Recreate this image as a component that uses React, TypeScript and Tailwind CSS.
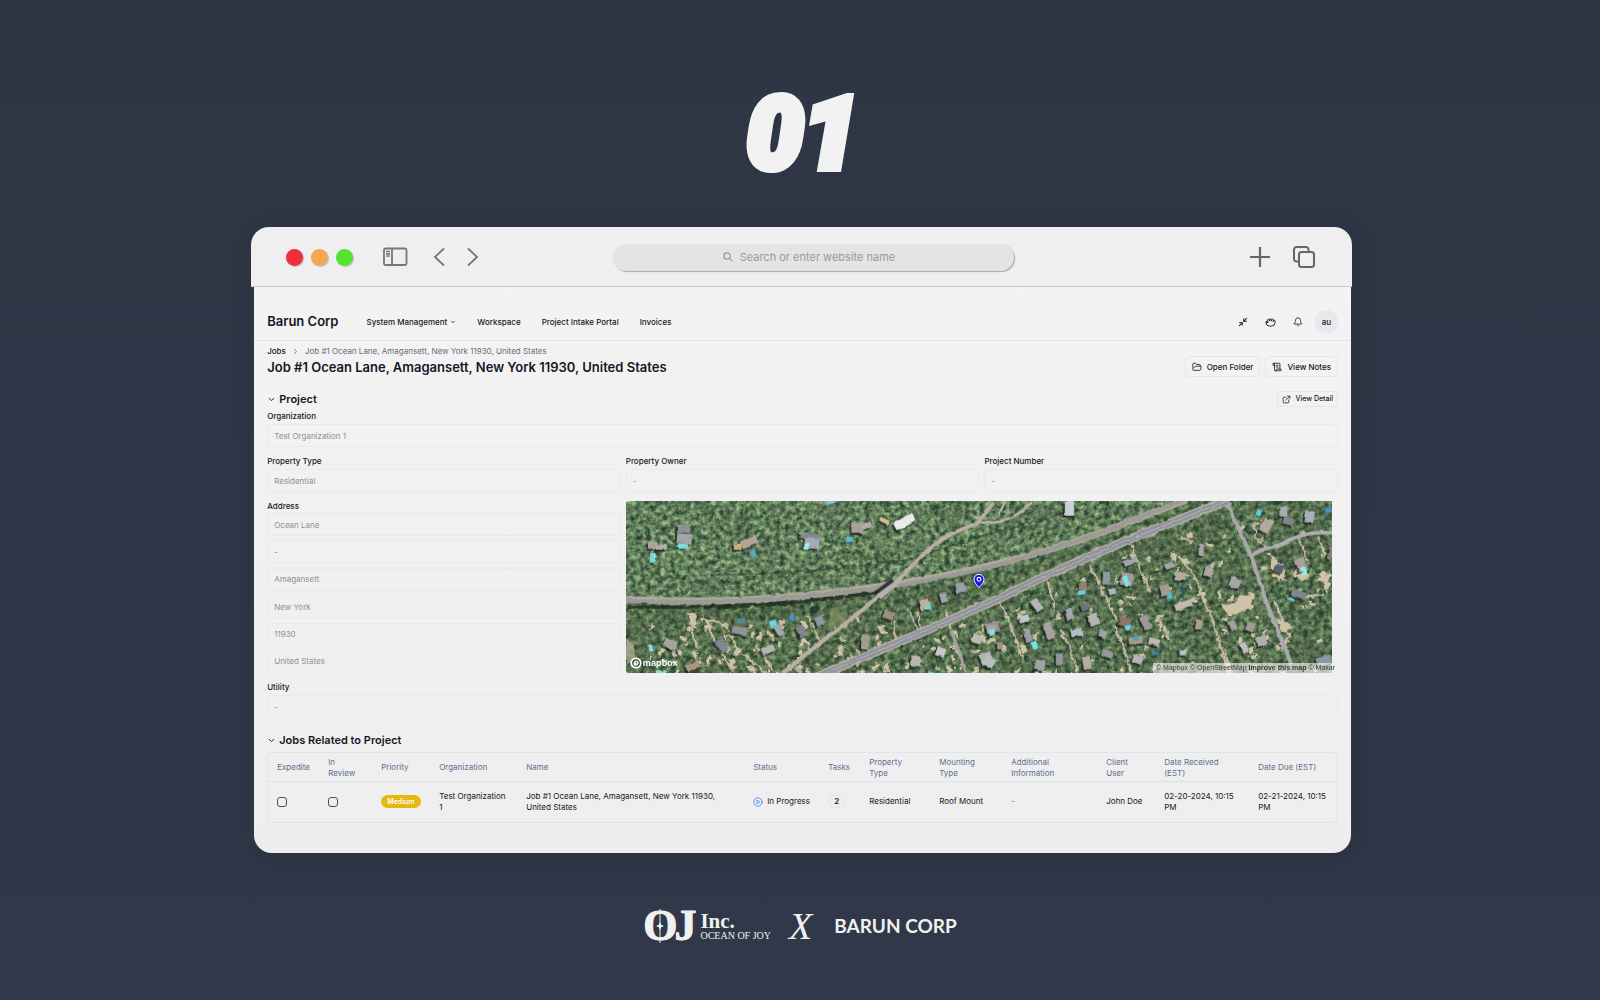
import type { ReactNode } from "react";
import {
  Bell,
  ChevronDown,
  ChevronRight,
  CirclePlay,
  ExternalLink,
  FolderOpen,
  Grab,
  Minimize2,
  ScrollText,
} from "lucide-react";

/* ---------- Browser chrome ---------- */

function SidebarIcon() {
  return (
    <svg viewBox="0 0 25 20" className="h-5 w-[25px]" fill="none" stroke="#777" strokeWidth="1.8">
      <rect x="1" y="1.5" width="22.5" height="16.5" rx="1.5" />
      <path d="M9 1.5v16.5" />
      <path d="M3 4.5h4M3 6.800h4M3.500 9h3.500" strokeWidth="1.700" />
    </svg>
  );
}

function Toolbar() {
  return (
    <div className="grid h-[60px] grid-cols-[13fr_auto_12fr] items-center rounded-t-[18px] border-b border-[#c6c6c6] bg-[#efefef] pt-px pr-[37px] pl-[35px]">
      <div className="flex items-center">
        <div className="flex gap-2">
          <span className="size-[17px] rounded-full bg-[#ee2f3c] shadow-[1px_1px_1px_#0003]" />
          <span className="size-[17px] rounded-full bg-[#f3a84e] shadow-[1px_1px_1px_#0003]" />
          <span className="size-[17px] rounded-full bg-[#53e331] shadow-[1px_1px_1px_#0003]" />
        </div>
        <button aria-label="Toggle sidebar" className="ml-[30px]">
          <SidebarIcon />
        </button>
        <button aria-label="Back" className="ml-[25px]">
          <svg viewBox="0 0 12 20" className="h-5 w-3" fill="none" stroke="#777" strokeWidth="1.8">
            <path d="M11 1.5 2 10l9 8.5" />
          </svg>
        </button>
        <button aria-label="Forward" className="ml-[22px]">
          <svg viewBox="0 0 12 20" className="h-5 w-3" fill="none" stroke="#777" strokeWidth="1.8">
            <path d="M1 1.5 10 10l-9 8.5" />
          </svg>
        </button>
      </div>
      <label className="flex h-[27px] w-[401px] items-center justify-center gap-[7px] rounded-full bg-[#e4e4e4] shadow-[1px_1px_1px_#0000004d]">
        <svg viewBox="0 0 10 10" className="size-[10px]" fill="none" stroke="#999" strokeWidth="1.2">
          <circle cx="4" cy="4" r="3.2" />
          <path d="m6.4 6.4 3 3" />
        </svg>
        <input
          aria-label="Address bar"
          placeholder="Search or enter website name"
          className="w-[164px] bg-transparent text-[11px] outline-none placeholder:text-[#999] placeholder:opacity-100"
        />
      </label>
      <div className="flex items-center justify-end gap-[23px]">
        <button aria-label="New tab">
          <svg viewBox="0 0 20 20" className="size-5" stroke="#666" strokeWidth="2.2">
            <path d="M10 0v20M0 10h20" />
          </svg>
        </button>
        <button aria-label="Show tabs">
          <svg viewBox="0 0 22 22" className="size-[22px]" fill="none" stroke="#666" strokeWidth="2">
            <path d="M6 15.500H3.500A2.500 2.500 0 0 1 1 13V3.500A2.500 2.500 0 0 1 3.500 1H13a2.500 2.500 0 0 1 2.500 2.500V6" />
            <rect x="6" y="6" width="15" height="15" rx="2.500" />
          </svg>
        </button>
      </div>
    </div>
  );
}

/* ---------- Form parts ---------- */

function ReadOnlyInput({ value, label, id }: { value: string; label?: string; id?: string }) {
  return (
    <input
      id={id}
      aria-label={label}
      readOnly
      value={value}
      className="h-[23px] w-full rounded-[4px] border border-[#e9eaec] bg-transparent px-[6px] text-[8px] text-[#8d9098] outline-none"
    />
  );
}

function Field({ id, label, value }: { id: string; label: string; value: string }) {
  return (
    <div className="flex flex-col gap-[3px]">
      <label htmlFor={id} className="text-[8px] leading-[10px] font-medium">
        {label}
      </label>
      <ReadOnlyInput id={id} value={value} />
    </div>
  );
}

function SectionTitle({ children }: { children: ReactNode }) {
  return (
    <button className="flex items-center gap-[3px] text-[11px] leading-4 font-semibold">
      <ChevronDown className="size-[9px]" strokeWidth={2.5} />
      {children}
    </button>
  );
}

function OutlineButton({ children, small }: { children: ReactNode; small?: boolean }) {
  return (
    <button
      className={
        small
          ? "flex h-4 items-center gap-[5px] rounded-[3px] border border-[#e4e6ea] px-[4px] text-[7px] font-medium"
          : "flex h-[21px] items-center gap-[5px] rounded-[4px] border border-[#e4e6ea] px-[6px] text-[8px] font-medium"
      }
    >
      {children}
    </button>
  );
}

/* ---------- Satellite map ---------- */

function createRandom(seed: number) {
  let s = seed;
  return () => {
    s = (s * 1664525 + 1013904223) % 4294967296;
    return s / 4294967296;
  };
}

// x, y, width, height, rotation, fill
type Block = [number, number, number, number, number, string];

const HOUSES: Block[] = [
  [22, 41, 9, 7, 0, "#a9a29f"], [30, 44, 11, 5, 0, "#b7afa6"], [51, 24, 13, 8, 0, "#8f9093"],
  [51, 33, 15, 10, 5, "#a3a4a8"], [115, 37, 17, 9, -25, "#b3a597"], [108, 43, 8, 6, 0, "#c8b183"],
  [175, 33, 20, 5, 5, "#85898f"], [179, 37, 15, 11, 5, "#a5a9b2"], [226, 22, 12, 10, 0, "#a7a09c"],
  [236, 22, 10, 6, -15, "#b3aea8"], [268, 17, 22, 9, -28, "#e9eaea"], [254, 18, 10, 4, 25, "#d2bd92"],
  [108, 118, 12, 8, 0, "#6d6b45"], [106, 126, 16, 8, 10, "#8e9497"], [150, 124, 7, 12, -30, "#a2a7ad"],
  [172, 125, 8, 12, -28, "#83858a"], [187, 105, 7, 6, 20, "#2e3840"], [190, 116, 8, 9, -25, "#8c989f"],
  [330, 82, 10, 10, -15, "#9aa0a8"], [315, 92, 7, 10, -15, "#a1a1a8"], [295, 99, 9, 10, -15, "#bfae9b"],
  [258, 110, 11, 9, 20, "#a08d80"], [236, 134, 8, 15, 5, "#a39c94"], [136, 146, 13, 7, -25, "#b5b5b8"],
  [92, 138, 8, 14, -35, "#7e8792"], [38, 139, 13, 9, 20, "#a5a59b"], [361, 122, 13, 10, -15, "#9a9490"],
  [347, 134, 10, 9, 20, "#c2bab0"], [286, 155, 9, 11, 0, "#b9b5b0"], [311, 147, 9, 9, 20, "#c9c7c4"],
  [355, 152, 12, 12, -20, "#b2b2b2"], [440, 1, 9, 14, 0, "#cdd0d2"], [478, 71, 7, 12, 5, "#8f98a3"],
  [454, 82, 8, 8, 0, "#937f70"], [496, 72, 12, 13, 10, "#a29c97"], [484, 88, 7, 6, -15, "#b0b5bb"],
  [536, 84, 9, 12, -15, "#a79b91"], [499, 58, 14, 6, -20, "#a2a6ab"], [574, 44, 6, 11, 0, "#a6a5a6"],
  [540, 62, 10, 6, -20, "#a1a4a8"], [550, 72, 11, 8, 0, "#b7ad9d"], [580, 66, 8, 10, 15, "#b0a6a0"],
  [605, 77, 11, 10, 20, "#a3a5a7"], [637, 18, 10, 14, 30, "#b3a99e"], [656, 6, 7, 10, 0, "#a9abac"],
  [659, 17, 10, 7, 15, "#82878b"], [680, 10, 10, 12, 10, "#acb0b5"], [672, 57, 10, 14, -20, "#a89f97"],
  [651, 64, 8, 8, 20, "#596472"], [667, 90, 15, 7, 20, "#82868b"], [408, 98, 8, 13, -35, "#b3b5b7"],
  [441, 108, 7, 12, -15, "#a0a8b3"], [464, 113, 10, 12, -20, "#b1b5b4"], [456, 103, 9, 6, -20, "#6c7780"],
  [394, 115, 10, 7, -15, "#c3c6c6"], [420, 122, 8, 17, -20, "#a8a29d"], [400, 128, 6, 13, -10, "#9b9ea3"],
  [446, 128, 12, 8, -10, "#b6bcc2"], [474, 130, 8, 8, 20, "#9fa3a4"], [494, 117, 12, 9, 20, "#8a776a"],
  [517, 115, 8, 14, -25, "#9e9a97"], [550, 101, 18, 7, -20, "#c0bcaf"], [571, 120, 7, 9, 0, "#b19f93"],
  [605, 120, 7, 10, -20, "#a3a0a1"], [622, 122, 8, 9, 20, "#a39b93"], [617, 142, 6, 11, -20, "#c0bfbd"],
  [632, 136, 10, 9, -20, "#afb0af"], [504, 136, 14, 8, -10, "#a69c92"], [524, 138, 11, 7, 15, "#c0bab0"],
  [362, 125, 8, 8, 0, "#a7a7a4"], [358, 156, 12, 10, 30, "#b7bcc0"], [410, 160, 10, 9, 15, "#a1a3a2"],
  [431, 153, 7, 12, 0, "#94989c"], [458, 156, 8, 13, -10, "#b3aea5"], [477, 150, 12, 7, 15, "#999b98"],
  [508, 155, 10, 8, 20, "#b3b5b9"], [692, 156, 15, 9, -15, "#8b98a6"], [372, 142, 6, 7, 0, "#9a948b"],
  [60, 162, 14, 8, -25, "#ac9683"], [555, 150, 7, 5, 0, "#b8c2c8"], [704, 46, 4, 13, 10, "#86817e"],
];

const POOLS: Block[] = [
  [24, 52, 5, 9, 5, "#7fd8da"], [53, 43, 9, 5, 0, "#7edbe0"], [125, 50, 5, 6, -20, "#4ab0d6"],
  [179, 42, 4, 7, 0, "#a5e9ec"], [221, 36, 7, 5, 0, "#53bfe0"], [202, 0, 8, 3, 0, "#6cc8e8"],
  [111, 119, 9, 4, 0, "#4d8c98"], [144, 120, 7, 6, -20, "#6fd6e6"], [164, 114, 4, 7, -35, "#3d93d8"],
  [300, 105, 6, 4, -10, "#5fd8df"], [23, 144, 4, 7, -10, "#8be0df"], [499, 75, 5, 10, -20, "#7be6e4"],
  [453, 90, 8, 4, -10, "#62d2e6"], [542, 93, 6, 5, -20, "#4cbbd4"], [677, 66, 5, 9, -20, "#97ece4"],
  [632, 9, 5, 6, 15, "#5fcfe6"], [701, 7, 6, 5, -15, "#3f94d8"], [407, 141, 5, 8, -25, "#79dfe0"],
  [500, 125, 7, 4, -15, "#6cd9e6"], [364, 129, 5, 6, -15, "#86e0e0"], [664, 97, 5, 3, 0, "#5fcbd9"],
  [508, 136, 6, 4, 0, "#4f9fb8"], [30, 170, 10, 3, 0, "#8be0df"], [528, 151, 7, 3, 15, "#3b7bb0"],
  [303, 171, 5, 2, 0, "#5fd8df"], [557, 88, 3, 5, -20, "#2f557d"],
];

const SANDY_LANES = [
  "M75 118 100 124 112 150 140 172", "M80 118 88 140 108 172", "M66 125 71 148",
  "M182 115 190 130 194 142", "M292 110 295 130", "M268 120 270 140", "M374 100 384 120 398 160",
  "M421 76 428 100 430 110", "M435 130 445 145 453 172", "M464 65 474 80 479 95", "M507 45 516 70 526 92",
  "M553 55 567 70 578 95 588 120 604 172", "M489 125 500 150 506 172", "M535 120 545 138",
  "M555 35 568 42", "M630 24 632 38 642 47", "M627 24 638 20", "M647 55 652 72 662 80", "M650 100 665 135 658 150",
  "M674 37 684 60", "M694 36 700 52 708 56", "M480 95 492 120", "M700 94 678 96",
  "M40 140 50 156", "M320 110 326 128", "M366 125 350 134", "M600 150 606 172", "M130 145 144 165 148 172",
];

function blockRects(blocks: Block[]) {
  return blocks.map(([x, y, w, h, r, fill], i) => (
    <rect key={i} x={x} y={y} width={w} height={h} fill={fill} transform={`rotate(${r} ${x + w / 2} ${y + h / 2})`} />
  ));
}

function SatelliteImage() {
  const random = createRandom(42);
  const patches = Array.from({ length: 230 }, () => {
    const x = 20 + random() * 688;
    const roadY = x < 260 ? 108 : 172 - (x - 194) * 0.415;
    const y = Math.max(6, roadY) + 10 + random() * (170 - Math.max(6, roadY));
    return { x, y, rx: 1 + random() * 4, ry: 1 + random() * 1.5, r: random() * 180 };
  });
  const trees = Array.from({ length: 1300 }, () => ({
    x: random() * 708,
    y: random() * 173,
    r: 0.8 + random() * 2.4,
    light: random() > 0.4,
  }));
  return (
    <svg viewBox="0 0 708 173" preserveAspectRatio="xMidYMid slice" className="size-full" aria-hidden="true">
      <defs>
        <filter id="canopy" x="0" y="0" width="100%" height="100%" colorInterpolationFilters="sRGB">
          <feTurbulence type="fractalNoise" baseFrequency="0.2" numOctaves="4" seed="8" />
          <feColorMatrix values="1.7 0 0 0 -0.3  1.7 0 0 0 -0.3  1.7 0 0 0 -0.3  0 0 0 0 1" />
          <feComponentTransfer>
            <feFuncR type="table" tableValues="0.14 0.24 0.36 0.48 0.64" />
            <feFuncG type="table" tableValues="0.23 0.35 0.48 0.60 0.74" />
            <feFuncB type="table" tableValues="0.19 0.26 0.34 0.43 0.54" />
          </feComponentTransfer>
        </filter>
        <filter id="tint" x="0" y="0" width="100%" height="100%" colorInterpolationFilters="sRGB">
          <feTurbulence type="fractalNoise" baseFrequency="0.03" numOctaves="3" seed="21" />
          <feColorMatrix values="0 0 0 0 0.34  0 0 0 0 0.38  0 0 0 0 0.32  2.4 0 0 0 -1" />
        </filter>
        <filter id="rough" x="-2%" y="-2%" width="104%" height="104%" colorInterpolationFilters="sRGB">
          <feTurbulence type="fractalNoise" baseFrequency="0.2" numOctaves="2" seed="3" result="n" />
          <feDisplacementMap in="SourceGraphic" in2="n" scale="6" xChannelSelector="R" yChannelSelector="G" />
        </filter>
        <filter id="edge" x="-2%" y="-2%" width="104%" height="104%" colorInterpolationFilters="sRGB">
          <feTurbulence type="fractalNoise" baseFrequency="0.12" numOctaves="2" seed="5" result="n" />
          <feDisplacementMap in="SourceGraphic" in2="n" scale="3" xChannelSelector="R" yChannelSelector="G" />
          <feGaussianBlur stdDeviation="0.35" />
        </filter>
      </defs>
      <rect width="708" height="173" filter="url(#canopy)" />
      <rect width="708" height="173" filter="url(#tint)" opacity="0.35" />
      <path d="M0 104 61 105 161 101 254 91 374 64 487 31 560 0H708V173H0Z" fill="#2c3a26" opacity="0.22" />
      <g filter="url(#rough)">
        {trees.map((t, i) => (
          <circle key={i} cx={t.x} cy={t.y} r={t.r} fill={t.light ? "#7ba06c" : "#1f3325"} opacity={t.light ? 0.3 : 0.4} />
        ))}
      </g>
      <g filter="url(#rough)" fill="#d0c2a8">
        {patches.map((p, i) => (
          <ellipse key={i} cx={p.x} cy={p.y} rx={p.rx} ry={p.ry} transform={`rotate(${p.r} ${p.x} ${p.y})`} />
        ))}
        <path d="M596 104 608 104 614 96 632 92 626 106 616 112 604 116Z" />
        <path d="M647 56 656 62 662 72 655 80 648 74Z" />
        <path d="M672 68 686 74 680 80 668 76Z" />
        <path d="M692 80 698 70 706 76 702 84Z" />
        <path d="M206 108 224 112 220 128 202 130Z" fill="#8c9a68" opacity="0.5" />
        <path d="M62 112 70 113 70 128 64 124Z" />
        <path d="M654 120 668 124 662 132 656 130Z" />
        <path d="M0 138 8 145 9 160 0 164Z" opacity="0.6" />
        <path d="M68 72H112" stroke="#b3aa80" strokeWidth="1" />
      </g>
      <g filter="url(#rough)" fill="none" stroke="#cfc0a8" strokeWidth="2">
        {SANDY_LANES.map((d) => (
          <path key={d} d={d} />
        ))}
      </g>
      <path d="M2 107 61 107 161 103 250 92" fill="none" stroke="#1c2a22" strokeWidth="4" opacity="0.8" filter="url(#rough)" />
      <path d="M90 74 170 72 280 60 374 30 460 8" fill="none" stroke="#22352a" strokeWidth="1.500" opacity="0.6" filter="url(#rough)" />
      <g filter="url(#edge)" fill="none">
        <path d="M0 99C90 103 160 99 254 86S420 52 487 28L562-1" stroke="#b0ab9c" strokeWidth="7" />
        <path d="M0 100C90 104 160 99 254 87S420 52 487 28L560-1" stroke="#9c9a96" strokeWidth="4" />
        <path d="M157 173 194 143 234 112 274 78C290 62 300 50 318 38S345 28 354 21L368 2" stroke="#b9afa5" strokeWidth="4" />
        <path d="M354 21C366 24 388 22 407 1M374 14 380 0" stroke="#b9b3a8" strokeWidth="2.500" />
        <path d="M190 177 294 133 374 98 421 75 501 40 605-1" stroke="#b9b3aa" strokeWidth="9" />
        <path d="M190 177 294 133 374 98 421 75 501 40 605-1" stroke="#8f9299" strokeWidth="6" />
        <path d="M190 177 294 133 374 98 421 75 501 40 605-1" stroke="#b9bbc0" strokeWidth="1" />
        <path d="M603 3 627 56 641 99 667 164" stroke="#aaa8ac" strokeWidth="4" />
        <path d="M627 56C634 47 648 48 660 42S682 31 708 32" stroke="#b0adad" strokeWidth="3.500" />
        <path d="M326 130 332 146 341 172" stroke="#a5a5a0" strokeWidth="3" />
        <path d="M170 166 176 173" stroke="#b0aca2" strokeWidth="4" />
        <path d="M282 108 293 130" stroke="#a8a8a4" strokeWidth="2" />
      </g>
      <path d="m251 94 18-13-3-3-18 14Z" fill="#20252a" opacity="0.85" />
      <path d="m254 97 22-18" stroke="#b3b2b0" strokeWidth="4" />
      <g filter="url(#edge)">
        <g fill="#15201a" opacity="0.7" transform="translate(-2 2)">
          {HOUSES.map(([x, y, w, h, r], i) => (
            <rect key={i} x={x} y={y} width={w} height={h} transform={`rotate(${r} ${x + w / 2} ${y + h / 2})`} />
          ))}
        </g>
        {blockRects(HOUSES)}
        {blockRects(POOLS)}
      </g>
    </svg>
  );
}

function MapPanel() {
  return (
    <div className="relative col-span-2 mr-[6px] h-[172px]">
      <div className="size-full overflow-hidden rounded-l-[3px]">
        <SatelliteImage />
      </div>
      <svg viewBox="0 0 12 14" className="absolute top-[73px] left-1/2 h-[14px] w-3 -translate-x-1/2" aria-label="Job location">
        <path d="M6 13.500S1 9 1 5.300a5 5 0 0 1 10 0C11 9 6 13.500 6 13.500Z" fill="#1616ee" stroke="#fff" strokeWidth="1" />
        <circle cx="6" cy="5.300" r="1.900" fill="#1616ee" stroke="#fff" strokeWidth="1.100" />
      </svg>
      <a href="#mapbox" className="absolute bottom-1 left-1 flex items-center gap-px text-white">
        <svg viewBox="0 0 12 12" className="size-3" aria-hidden="true">
          <circle cx="6" cy="6" r="4.700" fill="#2a3a2d" stroke="#fff" strokeWidth="1.800" />
          <path d="M3.500 8.500c-.5-3 .7-5 3-5a2.300 2.300 0 0 1 2.200 2.300C8.700 8.500 6 9 3.500 8.500Z" fill="#fff" />
          <path d="m6.400 4.400.4.900.9.400-.9.400-.4.900-.4-.9-.9-.4.900-.4Z" fill="#2a3a2d" />
        </svg>
        <span className="text-[9px] leading-3 font-semibold">mapbox</span>
      </a>
      <div className="absolute right-0 bottom-0 flex h-[10px] w-[179px] items-center gap-[2px] bg-white/60 pl-[3px] font-['Liberation_Sans',sans-serif] text-[7px] whitespace-nowrap text-[#3a3a3a]">
        <a href="#mapbox-about">© Mapbox</a>
        <a href="#osm">© OpenStreetMap</a>
        <a href="#improve" className="font-bold">
          Improve this map
        </a>
        <a href="#maxar">© Maxar</a>
      </div>
    </div>
  );
}

/* ---------- Jobs table ---------- */

const HEADERS = [
  "Expedite", "In Review", "Priority", "Organization", "Name", "Status", "Tasks", "Property Type",
  "Mounting Type", "Additional Information", "Client User", "Date Received (EST)", "Date Due (EST)",
];

function JobsTable() {
  return (
    <div className="rounded-[4px] border border-[#e1e3e7]">
      <table className="w-full table-fixed text-left text-[8px] leading-[11px]">
        <colgroup>
          <col className="w-[51px]" />
          <col className="w-[53px]" />
          <col className="w-[58px]" />
          <col className="w-[87px]" />
          <col className="w-[227px]" />
          <col className="w-[75px]" />
          <col className="w-[41px]" />
          <col className="w-[70px]" />
          <col className="w-[72px]" />
          <col className="w-[95px]" />
          <col className="w-[58px]" />
          <col className="w-[94px]" />
          <col className="w-[90px]" />
        </colgroup>
        <thead>
          <tr className="h-7 border-b border-[#e1e3e9] text-[#5d7092]">
            {HEADERS.map((h) => (
              <th key={h} className="pt-[2px] pr-[9px] pl-[9px] align-middle font-normal">
                {h}
              </th>
            ))}
          </tr>
        </thead>
        <tbody>
          <tr className="h-[41px] *:pr-[9px] *:pl-[9px]">
            <td>
              <input type="checkbox" aria-label="Expedite" className="block size-[10px] appearance-none rounded-[3px] border border-[#4c505c]" />
            </td>
            <td>
              <input type="checkbox" aria-label="In review" className="block size-[10px] appearance-none rounded-[3px] border border-[#4c505c]" />
            </td>
            <td>
              <span className="inline-block rounded-full bg-[#e6b710] px-[6px] py-px text-[7px] font-semibold text-white">Medium</span>
            </td>
            <td>Test Organization 1</td>
            <td>Job #1 Ocean Lane, Amagansett, New York 11930, United States</td>
            <td className="whitespace-nowrap">
              <span className="flex items-center gap-1">
                <CirclePlay className="size-[10px] shrink-0 text-[#3b82f6]" />
                In Progress
              </span>
            </td>
            <td>
              <span className="inline-block rounded-full border border-[#e1e3e7] px-[5px] text-[8px] font-semibold">2</span>
            </td>
            <td>Residential</td>
            <td>Roof Mount</td>
            <td className="text-[#6b7280]">-</td>
            <td>John Doe</td>
            <td>02-20-2024, 10:15 PM</td>
            <td>02-21-2024, 10:15 PM</td>
          </tr>
        </tbody>
      </table>
    </div>
  );
}

/* ---------- Page ---------- */

const ADDRESS: [string, string][] = [
  ["Street 1", "Ocean Lane"],
  ["Street 2", "-"],
  ["City", "Amagansett"],
  ["State", "New York"],
  ["Postal code", "11930"],
  ["Country", "United States"],
];

function AppHeader() {
  return (
    <header className="flex h-[54px] items-end border-b border-[#e4e5e8] px-[13px] pb-[7px]">
      <div className="flex h-[23px] w-full items-center">
        <a href="#home" className="text-[13px] font-semibold">
          Barun Corp
        </a>
        <nav className="ml-[28px] flex items-center gap-[21px] text-[8px] font-medium">
          <button className="flex items-center gap-[3px]">
            System Management
            <ChevronDown className="size-[6px]" strokeWidth={3} />
          </button>
          <a href="#workspace">Workspace</a>
          <a href="#intake">Project Intake Portal</a>
          <a href="#invoices">Invoices</a>
        </nav>
        <div className="ml-auto flex items-center">
          <button aria-label="Minimize">
            <Minimize2 className="size-[10px]" strokeWidth={2.5} />
          </button>
          <button aria-label="Grab" className="ml-[17px]">
            <Grab className="size-[11px]" />
          </button>
          <button aria-label="Notifications" className="ml-[17px]">
            <Bell className="size-[10px]" />
          </button>
          <button className="ml-3 size-[23px] rounded-full bg-[#e7e8ee] text-[8px] font-medium">au</button>
        </div>
      </div>
    </header>
  );
}

function JobPage() {
  return (
    <div className="mr-px ml-[3px] rounded-b-[18px] bg-linear-to-b from-[#f3f3f3] to-[#eeeeee] pb-[30px] text-[#141827]">
      <AppHeader />
      <main className="px-[13px] pt-1">
        <div className="flex items-end justify-between">
          <div>
            <div className="flex items-center gap-[5px] text-[8px] leading-3">
              <a href="#jobs" className="font-medium">
                Jobs
              </a>
              <ChevronRight className="size-[9px] text-[#5b6474]" />
              <span className="text-[#656d7d]">Job #1 Ocean Lane, Amagansett, New York 11930, United States</span>
            </div>
            <h1 className="text-[13px] leading-5 font-semibold">
              Job #1 Ocean Lane, Amagansett, New York 11930, United States
            </h1>
          </div>
          <div className="flex gap-[5px]">
            <OutlineButton>
              <FolderOpen className="size-[10px]" />
              Open Folder
            </OutlineButton>
            <OutlineButton>
              <ScrollText className="size-[10px]" />
              View Notes
            </OutlineButton>
          </div>
        </div>

        <div className="mt-[14px] flex items-center justify-between">
          <SectionTitle>Project</SectionTitle>
          <OutlineButton small>
            <ExternalLink className="size-[9px]" />
            View Detail
          </OutlineButton>
        </div>
        <div className="mt-1 flex flex-col gap-[9px]">
          <Field id="organization" label="Organization" value="Test Organization 1" />
          <div className="grid grid-cols-3 gap-x-[5px] gap-y-[9px]">
            <Field id="property-type" label="Property Type" value="Residential" />
            <Field id="property-owner" label="Property Owner" value="-" />
            <Field id="project-number" label="Project Number" value="-" />
            <fieldset className="flex flex-col justify-between">
              <legend className="contents">
                <span className="block text-[8px] leading-[10px] font-medium">Address</span>
              </legend>
              <div className="flex h-[160px] flex-col justify-between">
                {ADDRESS.map(([label, value]) => (
                  <ReadOnlyInput key={label} label={label} value={value} />
                ))}
              </div>
            </fieldset>
            <MapPanel />
          </div>
          <Field id="utility" label="Utility" value="-" />
        </div>

        <div className="mt-[14px] mb-1">
          <SectionTitle>Jobs Related to Project</SectionTitle>
        </div>
        <JobsTable />
      </main>
    </div>
  );
}

function Partners() {
  return (
    <footer className="mt-[56px] flex items-center justify-center text-[#f1f1f1]">
      <div className="flex items-center gap-1 font-['Liberation_Serif',serif]">
        <div className="relative flex h-[34px] items-center text-[44px] leading-[34px] font-bold [-webkit-text-stroke:1px_#f1f1f1]">
          <span>O</span>
          <span className="-ml-[3px]">J</span>
          <svg viewBox="0 0 34 34" className="absolute top-0 left-0 size-[34px]" fill="#f1f1f1" aria-hidden="true">
            <path d="M16.500 0h1v34h-1Z" />
            <path d="m17 13 1.200 2.800L21 17l-2.800 1.200L17 21l-1.200-2.800L13 17l2.800-1.200Z" />
          </svg>
        </div>
        <div className="flex flex-col">
          <span className="text-[21px] leading-[18px] font-bold">Inc.</span>
          <span className="text-[10px] leading-[11px]">OCEAN OF JOY</span>
        </div>
      </div>
      <span className="ml-[18px] font-['Liberation_Serif',serif] text-[38px] leading-[34px] italic">X</span>
      <span className="ml-[22px] font-[Lato,sans-serif] text-[19px] leading-[34px] font-bold">BARUN CORP</span>
    </footer>
  );
}

export default function App() {
  return (
    <div className="min-h-screen bg-linear-to-b from-[#2e3646] to-[#303849] pb-10 font-[Inter,sans-serif]">
      <div className="flex h-[227px] items-center justify-center pt-[40px] pl-[6px]">
        <span className="font-[Roboto,sans-serif] text-[100px] leading-[100px] font-black text-[#f2f2f2] italic [-webkit-text-stroke:8px_#f2f2f2]">
          01
        </span>
      </div>
      <div className="pr-[15.5%] pl-[15.7%]">
        <div className="rounded-[18px] shadow-[4px_6px_24px_#00000026]">
          <Toolbar />
          <JobPage />
        </div>
      </div>
      <Partners />
    </div>
  );
}
